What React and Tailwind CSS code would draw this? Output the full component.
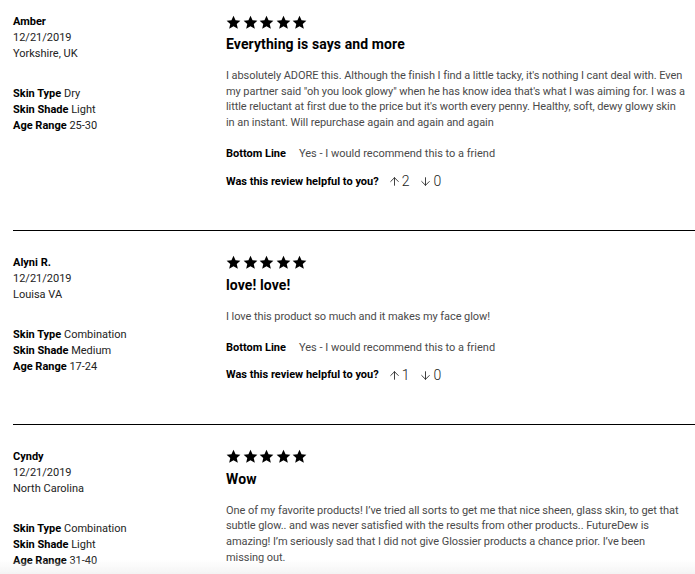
import { ArrowUp, ArrowDown } from "lucide-react";

const reviews = [
  {
    id: 1,
    name: "Amber",
    date: "12/21/2019",
    location: "Yorkshire, UK",
    skinType: "Dry",
    skinShade: "Light",
    ageRange: "25-30",
    title: "Everything is says and more",
    body: "I absolutely ADORE this. Although the finish I find a little tacky, it's nothing I cant deal with. Even my partner said \"oh you look glowy\" when he has know idea that's what I was aiming for. I was a little reluctant at first due to the price but it's worth every penny. Healthy, soft, dewy glowy skin in an instant. Will repurchase again and again and again",
    up: 2,
    down: 0,
  },
  {
    id: 2,
    name: "Alyni R.",
    date: "12/21/2019",
    location: "Louisa VA",
    skinType: "Combination",
    skinShade: "Medium",
    ageRange: "17-24",
    title: "love! love!",
    body: "I love this product so much and it makes my face glow!",
    up: 1,
    down: 0,
  },
  {
    id: 3,
    name: "Cyndy",
    date: "12/21/2019",
    location: "North Carolina",
    skinType: "Combination",
    skinShade: "Light",
    ageRange: "31-40",
    title: "Wow",
    body: "One of my favorite products! I\u2019ve tried all sorts to get me that nice sheen, glass skin, to get that subtle glow.. and was never satisfied with the results from other products.. FutureDew is amazing! I\u2019m seriously sad that I did not give Glossier products a chance prior. I\u2019ve been missing out.",
    up: 0,
    down: 0,
    last: true,
  },
];

const Star = () => (
  <svg width="15" height="15" viewBox="0 0 24 24" className="fill-black">
    <path d="M12 1.2l3.3 7.1 7.7.8-5.8 5.2 1.7 7.6L12 18l-6.9 3.9 1.7-7.6L1 9.1l7.7-.8z" />
  </svg>
);

const Review = ({ review }) => {
  return (
    <div className={review.last ? "pt-[24px]" : "pt-[24px] pb-[39px] border-b border-black"}>
      <div className="flex">
        <div className="w-[213px] shrink-0 text-[11px] leading-[16px] text-[#222]">
          <div className="font-bold text-black">{review.name}</div>
          <div>{review.date}</div>
          <div>{review.location}</div>
          <div className="mt-[24px]">
            <span className="font-bold text-black">Skin Type</span> {review.skinType}
          </div>
          <div>
            <span className="font-bold text-black">Skin Shade</span> {review.skinShade}
          </div>
          <div>
            <span className="font-bold text-black">Age Range</span> {review.ageRange}
          </div>
        </div>
        <div className="w-[459px]">
          <div className="flex gap-[1.5px] h-[16px] items-center">
            <Star />
            <Star />
            <Star />
            <Star />
            <Star />
          </div>
          <h3 className="mt-[4px] text-[14px] leading-[20px] font-bold text-black tracking-[0.1px]">
            {review.title}
          </h3>
          <p className="mt-[14px] text-[11px] leading-[15.7px] text-[#4a4a4a] tracking-[-0.07px]">
            {review.body}
          </p>
          {!review.last && (
            <>
              <div className="mt-[15px] flex text-[11px] leading-[16px]">
                <span className="font-bold text-black">Bottom Line</span>
                <span className="ml-[13px] text-[#4a4a4a]">
                  Yes - I would recommend this to a friend
                </span>
              </div>
              <div className="mt-[11px] flex items-center h-[18px]">
                <span className="text-[11px] font-bold text-black">
                  Was this review helpful to you?
                </span>
                <span className="ml-[9px] flex items-center text-[14px] font-light text-[#222]">
                  <ArrowUp size={13} strokeWidth={1.6} />
                  <span className="ml-[1px]">{review.up}</span>
                </span>
                <span className="ml-[10px] flex items-center text-[14px] font-light text-[#222]">
                  <ArrowDown size={13} strokeWidth={1.6} />
                  <span className="ml-[1px]">{review.down}</span>
                </span>
              </div>
            </>
          )}
        </div>
      </div>
    </div>
  );
};

const App = () => {
  return (
    <div className="w-full min-h-screen bg-white pl-[13px] font-['Roboto',sans-serif] overflow-hidden">
      <div className="-mt-[10px]">
        {reviews.map((review) => (
          <Review key={review.id} review={review} />
        ))}
      </div>
      <div className="fixed bottom-0 left-0 right-0 h-[14px] bg-gradient-to-b from-white/0 to-[#f4f4f4]" />
    </div>
  );
};

export default App;
